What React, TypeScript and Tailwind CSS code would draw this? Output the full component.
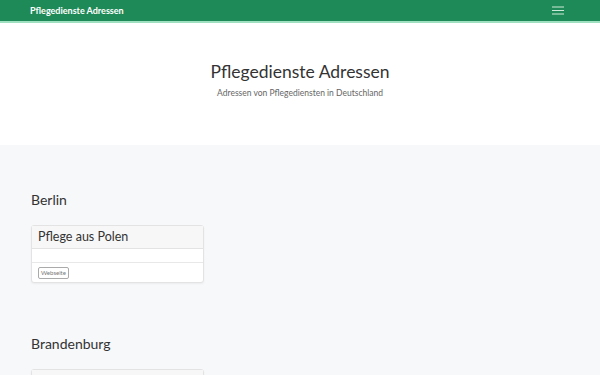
import React from 'react';

const regions = [
  { name: 'Berlin', entries: [{ title: 'Pflege aus Polen', web: true }] },
  { name: 'Brandenburg', entries: [{ title: '', web: false }] },
];

const EntryCard: React.FC<{ title: string; web: boolean }> = ({ title, web }) => (
  <div className="w-[173px] bg-white border border-[#e3e3e3] rounded-[3px] shadow-[0_1px_2px_rgba(0,0,0,0.05)]">
    <div className="bg-[#f7f7f7] border-b border-[#e3e3e3] px-[6px] h-[23px] flex items-center">
      <h3 className="text-[12.5px] text-[#333] leading-none">{title}</h3>
    </div>
    <div className="h-[14px] border-b border-[#e8e8e8]" />
    <div className="h-[19px] px-[6px] flex items-center">
      {web && (
        <span className="text-[6px] text-[#777] border border-[#aaa] rounded-[2px] px-[2px] h-[12px] flex items-center">
          Webseite
        </span>
      )}
    </div>
  </div>
);

export default function App() {
  return (
    <div className="h-[375px] overflow-hidden bg-[#f7f8fa] font-['Lato',sans-serif]">
      <nav className="h-[23px] bg-[#1e8a57] border-b-[2px] border-[#9fe0c0] flex items-center justify-between px-[30px]">
        <span className="text-white text-[9px] font-bold">Pflegedienste Adressen</span>
        <svg width="12" height="9" viewBox="0 0 12 9" className="mr-[6px]">
          <rect x="0" y="0.5" width="12" height="1" fill="#cfe9da" />
          <rect x="0" y="4" width="12" height="1" fill="#cfe9da" />
          <rect x="0" y="7.5" width="12" height="1" fill="#cfe9da" />
        </svg>
      </nav>
      <header className="bg-white h-[122px] flex flex-col items-center pt-[40px]">
        <h1 className="text-[17.5px] text-[#333] leading-none">Pflegedienste Adressen</h1>
        <p className="text-[8.5px] text-[#666] mt-[6px]">Adressen von Pflegediensten in Deutschland</p>
      </header>
      <main className="px-[31px] pt-[48px]">
        {regions.map((r) => (
          <section key={r.name} className="mb-[54px]">
            <h2 className="text-[14px] text-[#333] leading-none mb-[18px]">{r.name}</h2>
            {r.entries.map((e, i) => (
              <EntryCard key={i} title={e.title} web={e.web} />
            ))}
          </section>
        ))}
      </main>
    </div>
  );
}
